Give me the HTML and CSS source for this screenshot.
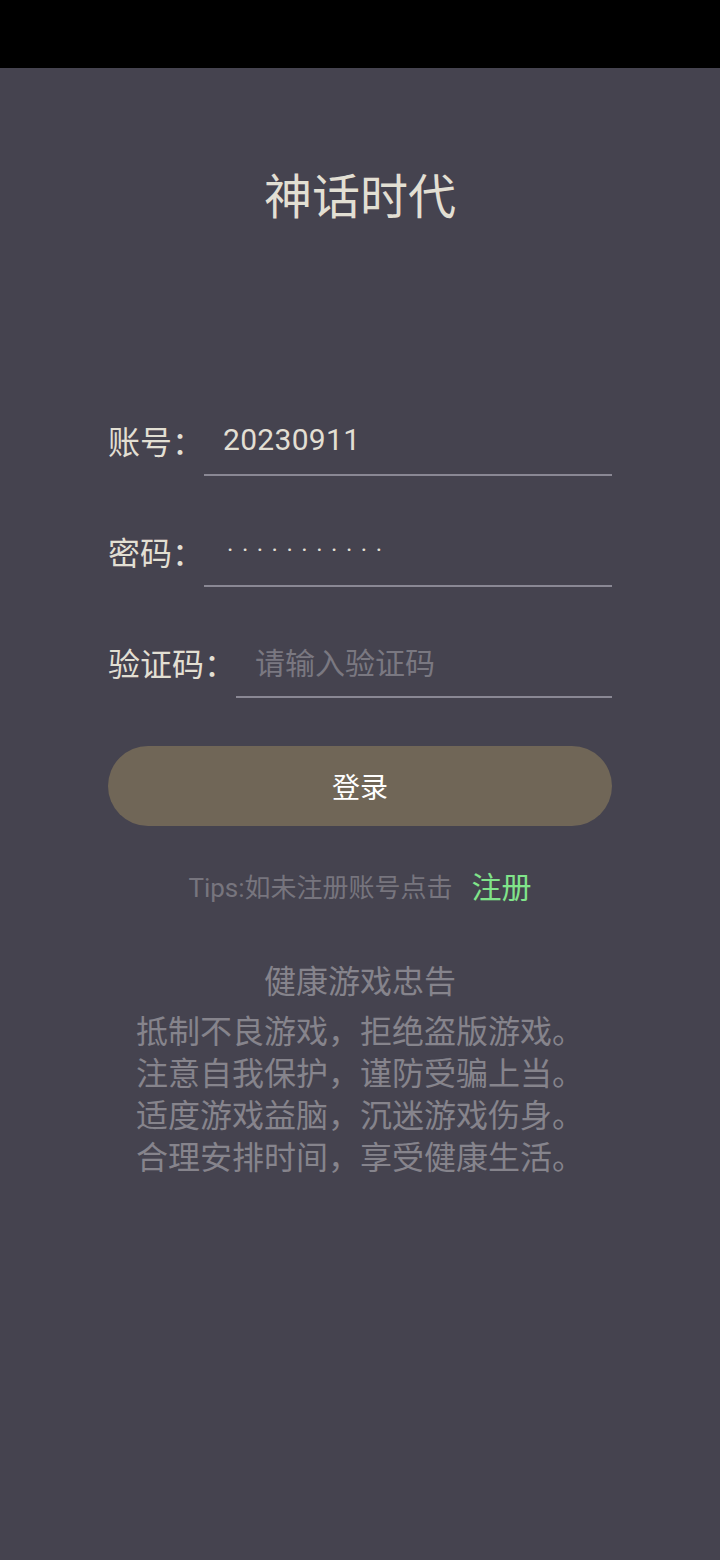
FILE: index.html
```html
<!DOCTYPE html>
<html lang="zh-CN">
<head>
<meta charset="utf-8">
<title>神话时代</title>
<link rel="stylesheet" href="styles.css">
</head>
<body>
<div class="status-bar"></div>
<main class="page">
  <h1 class="title">神话时代</h1>
  <form class="form">
    <div class="row">
      <label class="label">账号：</label>
      <div class="field"><span class="value">20230911</span></div>
    </div>
    <div class="row">
      <label class="label">密码：</label>
      <div class="field"><span class="dots">···········</span></div>
    </div>
    <div class="row">
      <label class="label">验证码：</label>
      <div class="field"><span class="placeholder">请输入验证码</span></div>
    </div>
    <div class="btn">登录</div>
  </form>
  <p class="tips"><span class="tips-text">Tips:如未注册账号点击</span><span class="register">注册</span></p>
  <section class="advice">
    <h2 class="advice-title">健康游戏忠告</h2>
    <p class="advice-body">抵制不良游戏，拒绝盗版游戏。<br>注意自我保护，谨防受骗上当。<br>适度游戏益脑，沉迷游戏伤身。<br>合理安排时间，享受健康生活。</p>
  </section>
</main>
</body>
</html>
```
FILE: styles.css
```css
* { box-sizing: border-box; }
html, body {
  margin: 0;
  padding: 0;
}
body {
  width: 720px;
  height: 1560px;
  background: #45434f;
  font-family: Roboto, "Noto Sans CJK SC", sans-serif;
  overflow: hidden;
}
.status-bar {
  height: 68px;
  background: #000;
}
.page {
  display: flex;
  flex-direction: column;
  align-items: center;
}
.title {
  margin: 96px 0 0;
  font-size: 48px;
  line-height: 58px;
  font-weight: 400;
  color: #e2dfd3;
  font-family: "Noto Sans CJK SC", sans-serif;
}
.form {
  width: 504px;
  margin-top: 182px;
  display: flex;
  flex-direction: column;
  gap: 39px;
}
.row {
  display: flex;
  align-items: center;
}
.label {
  font-family: "Noto Sans CJK SC", sans-serif;
  font-size: 32px;
  line-height: 40px;
  color: #e2dfd3;
  white-space: nowrap;
}
.field {
  flex: 1;
  height: 72px;
  border-bottom: 2px solid #8a8894;
  display: flex;
  align-items: center;
  padding-left: 19px;
}
.value {
  font-family: Roboto, sans-serif;
  font-size: 30px;
  color: #e2dfd3;
  letter-spacing: 0.3px;
}
.dots {
  font-family: Roboto, sans-serif;
  font-size: 24px;
  color: #e2dfd3;
  letter-spacing: 8.6px;
  margin-left: 4px;
}
.placeholder {
  font-family: "Noto Sans CJK SC", sans-serif;
  font-size: 30px;
  color: #7a7881;
}
.btn {
  margin-top: 9px;
  height: 80px;
  border-radius: 40px;
  background: #706657;
  color: #fff;
  font-family: "Noto Sans CJK SC", sans-serif;
  font-size: 28px;
  display: flex;
  align-items: center;
  justify-content: center;
}
.tips {
  margin: 39px 0 0;
  height: 40px;
  display: flex;
  align-items: center;
}
.tips-text {
  font-size: 26px;
  color: #77757e;
}
.register {
  margin-left: 19px;
  font-family: "Noto Sans CJK SC", sans-serif;
  font-size: 30px;
  color: #80e48a;
}
.advice {
  margin-top: 52px;
  text-align: center;
  color: #86848c;
  font-family: "Noto Sans CJK SC", sans-serif;
}
.advice-title {
  margin: 0;
  font-size: 32px;
  line-height: 44px;
  font-weight: 400;
}
.advice-body {
  margin: 7px 0 0;
  font-size: 32px;
  line-height: 42px;
}
```
